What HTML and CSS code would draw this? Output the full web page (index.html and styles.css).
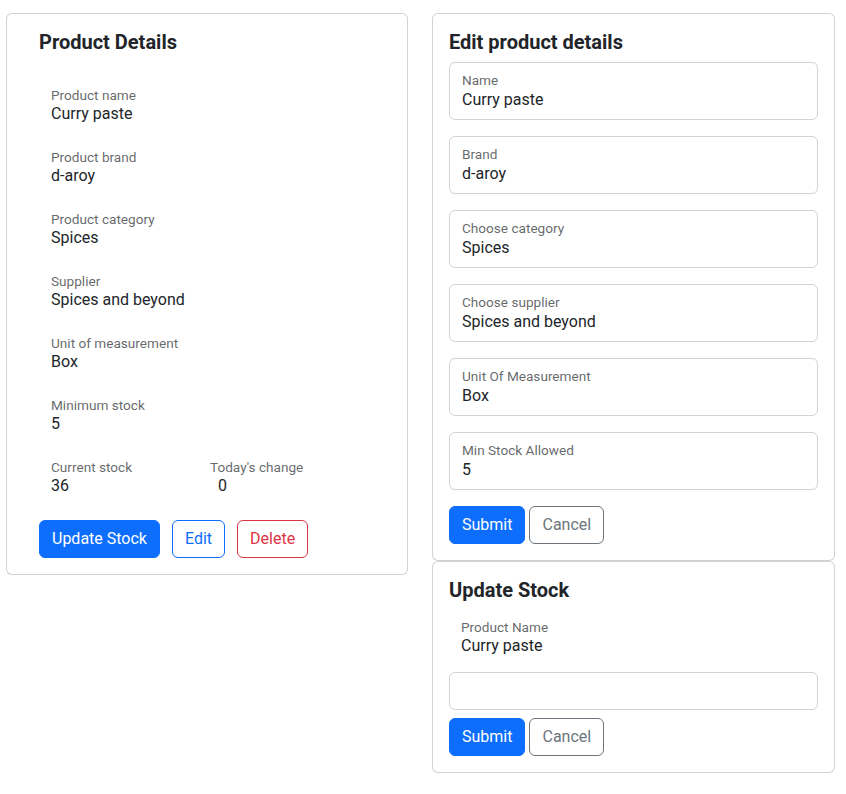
FILE: index.html
```html
<!DOCTYPE html>
<html lang="en">
<head>
<meta charset="utf-8">
<title>Product Details</title>
<link rel="stylesheet" href="styles.css">
</head>
<body>
<div class="page">
  <section class="card details">
    <h5 class="card-title details-title">Product Details</h5>
    <div class="field plain"><label>Product name</label><div class="value">Curry paste</div></div>
    <div class="field plain"><label>Product brand</label><div class="value">d-aroy</div></div>
    <div class="field plain"><label>Product category</label><div class="value">Spices</div></div>
    <div class="field plain"><label>Supplier</label><div class="value">Spices and beyond</div></div>
    <div class="field plain"><label>Unit of measurement</label><div class="value">Box</div></div>
    <div class="field plain"><label>Minimum stock</label><div class="value">5</div></div>
    <div class="field-row">
      <div class="field plain"><label>Current stock</label><div class="value">36</div></div>
      <div class="field plain change"><label>Today's change</label><div class="value">0</div></div>
    </div>
    <div class="actions spaced">
      <button class="btn btn-primary" type="button">Update Stock</button>
      <button class="btn btn-outline-primary" type="button">Edit</button>
      <button class="btn btn-outline-danger" type="button">Delete</button>
    </div>
  </section>

  <div class="side">
    <section class="card">
      <h5 class="card-title">Edit product details</h5>
      <form class="form">
        <div class="field boxed"><label for="f-name">Name</label><input id="f-name" type="text" value="Curry paste"></div>
        <div class="field boxed"><label for="f-brand">Brand</label><input id="f-brand" type="text" value="d-aroy"></div>
        <div class="field boxed"><label for="f-cat">Choose category</label><input id="f-cat" type="text" value="Spices"></div>
        <div class="field boxed"><label for="f-sup">Choose supplier</label><input id="f-sup" type="text" value="Spices and beyond"></div>
        <div class="field boxed"><label for="f-unit">Unit Of Measurement</label><input id="f-unit" type="text" value="Box"></div>
        <div class="field boxed"><label for="f-min">Min Stock Allowed</label><input id="f-min" type="text" value="5"></div>
        <div class="actions">
          <button class="btn btn-primary" type="submit">Submit</button>
          <button class="btn btn-outline-secondary" type="button">Cancel</button>
        </div>
      </form>
    </section>

    <section class="card">
      <h5 class="card-title">Update Stock</h5>
      <div class="field plain stock-name"><label>Product Name</label><div class="value">Curry paste</div></div>
      <input class="form-control" type="text" aria-label="Stock change">
      <div class="actions after-input">
        <button class="btn btn-primary" type="submit">Submit</button>
        <button class="btn btn-outline-secondary" type="button">Cancel</button>
      </div>
    </section>
  </div>
</div>
</body>
</html>
```

FILE: styles.css
```css
* { box-sizing: border-box; }

html, body {
  margin: 0;
  padding: 0;
  background: #fff;
}

body {
  font-family: Roboto, "Liberation Sans", Arial, sans-serif;
  font-size: 16px;
  line-height: 1.5;
  color: #212529;
}

.page {
  display: flex;
  align-items: flex-start;
  gap: 24px;
  padding: 13px 0 0 6px;
}

.side {
  display: flex;
  flex-direction: column;
  width: 403px;
}

.card {
  width: 402px;
  background: #fff;
  border: 1px solid rgba(0, 0, 0, 0.175);
  border-radius: 6px;
  padding: 16px;
}

.side .card {
  width: 403px;
}

.card.details {
  padding: 16px 32px 16px 32px;
}

.card-title {
  margin: 0 0 8px 0;
  font-size: 20px;
  line-height: 24px;
  font-weight: 700;
  color: #212529;
}

.details-title {
  margin-bottom: 24px;
}

/* floating-label style fields */
.field {
  height: 58px;
  border: 1px solid transparent;
  padding: 8px 12px 0 12px;
}

.field label {
  display: block;
  font-size: 13.6px;
  line-height: 19px;
  color: rgba(33, 37, 41, 0.7);
}

.field .value,
.field input {
  display: block;
  font-size: 16px;
  line-height: 18px;
  height: 18px;
  color: #212529;
}

.field input {
  width: 100%;
  border: 0;
  padding: 0;
  margin: 0;
  background: transparent;
  font-family: inherit;
  outline: none;
}

.field.plain {
  border-left: 0;
  border-right: 0;
  padding-top: 7px;
  margin-bottom: 4px;
}

.field.boxed {
  border-color: #ced4da;
  border-radius: 6px;
  padding-top: 6px;
  margin-bottom: 16px;
}

.field.boxed label {
  line-height: 22px;
}

.field-row {
  display: grid;
  grid-template-columns: 159px 1fr;
}

.field.change .value {
  padding-left: 8px;
}

.form-control {
  display: block;
  width: 100%;
  height: 38px;
  padding: 6px 12px;
  font-family: inherit;
  font-size: 16px;
  line-height: 24px;
  color: #212529;
  background: #fff;
  border: 1px solid #ced4da;
  border-radius: 6px;
}

.actions {
  display: flex;
  gap: 4px;
}

.actions.spaced {
  gap: 12px;
  margin-top: 8px;
}

.actions.after-input {
  margin-top: 8px;
}

.btn {
  display: inline-block;
  font-family: inherit;
  font-size: 16px;
  line-height: 24px;
  font-weight: 400;
  padding: 6px 12px;
  border: 1px solid transparent;
  border-radius: 6px;
  background: transparent;
  cursor: pointer;
}

.btn-primary {
  background: #0d6efd;
  border-color: #0d6efd;
  color: #fff;
}

.btn-outline-primary {
  border-color: #0d6efd;
  color: #0d6efd;
}

.btn-outline-danger {
  border-color: #dc3545;
  color: #dc3545;
}

.btn-outline-secondary {
  border-color: #6c757d;
  color: #6c757d;
}
```
